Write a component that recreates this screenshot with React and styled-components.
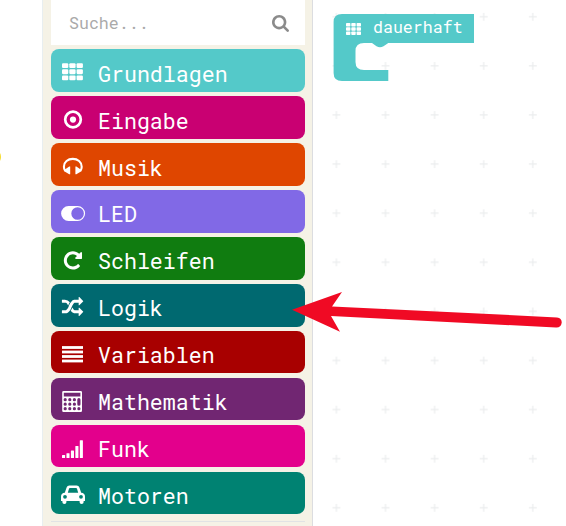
import React from "react";
import styled, { createGlobalStyle } from "styled-components";

const mono = `"Roboto Mono", "DejaVu Sans Mono", "Liberation Mono", monospace`;

const GlobalStyle = createGlobalStyle`
  *, *::before, *::after { box-sizing: border-box; }
  body { margin: 0; background: #fff; overflow: hidden; }
`;

const Editor = styled.main`
  position: relative;
  display: grid;
  grid-template-columns: 42px 271px 1fr;
  width: 566px;
  height: 526px;
  overflow: hidden;
  background: #fff;
  font-family: ${mono};
`;

const Simulator = styled.section`
  display: flex;
  align-items: center;
  overflow: hidden;
  padding-bottom: 213px;
`;

const SimulatorDot = styled.span`
  flex: none;
  width: 16px;
  height: 16px;
  margin-left: -15px;
  border-radius: 50%;
  background: #f5dc2e;
`;

const Toolbox = styled.aside`
  display: flex;
  flex-direction: column;
  padding: 0 7px 0 8px;
  border-left: 1px solid #e8eef0;
  border-right: 1px solid #dcdde0;
  background: #f5f2e6;
`;

const SearchBox = styled.label`
  flex: none;
  display: flex;
  align-items: center;
  justify-content: space-between;
  width: 254px;
  height: 45px;
  margin-bottom: 4px;
  padding: 1px 16px 0 18px;
  background: #fff;
`;

const SearchInput = styled.input`
  width: 150px;
  padding: 0 0 2px;
  border: 0;
  outline: 0;
  background: transparent;
  font: 16.6px ${mono};
  &::placeholder { color: #aaa; opacity: 1; }
`;

const CategoryList = styled.nav`
  display: flex;
  flex-direction: column;
  gap: 4.21px;
  width: 254px;
  padding-bottom: 6.6px;
  border-bottom: 1px solid #e1e3e4;
`;

const Category = styled.div`
  display: flex;
  align-items: flex-start;
  height: 42.75px;
  padding: 10px 0 0 9px;
  border-radius: 8px;
  background: ${(p) => p.$color};
  color: #fff;
`;

const CategoryIcon = styled.svg`
  flex: none;
  width: 26px;
  height: 24px;
  fill: currentColor;
`;

const CategoryName = styled.span`
  margin-left: 12px;
  padding-top: 1.61px;
  font-size: 21.6px;
  line-height: 26px;
  white-space: pre;
`;

const Workspace = styled.svg`
  width: 253px;
  height: 526px;
  font-family: ${mono};
`;

const Pointer = styled.svg`
  position: absolute;
  inset: 0;
  pointer-events: none;
`;

const RANDOM =
  "M666 481q-60 92-137 273-22-45-37-72.5t-40.5-63.5-51-56.5-63-35-81.5-14.5h-224q-14 0-23-9t-9-23v-192q0-14 9-23t23-9h224q250 0 410 225zm1126 799q0 14-9 23l-320 320q-9 9-23 9-13 0-22.5-9.5t-9.5-22.5v-192q-32 0-85 .5t-81 1-73-1-71-5-64-10.5-63-18.5-58-28.5-59-40-55-53.5-56-69.5q59-93 136-273 22 45 37 72.5t40.5 63.5 51 56.5 63 35 81.5 14.5h256v-192q0-14 9-23t23-9q12 0 24 10l319 319q9 9 9 23zm0-896q0 14-9 23l-320 320q-9 9-23 9-13 0-22.5-9.5t-9.5-22.5v-192h-256q-48 0-87 15t-69 45-51 61.5-45 77.5q-32 62-78 171-29 66-49.5 111t-54 105-64 100-74 83-90 68.5-106.5 42-128 16.5h-224q-14 0-23-9t-9-23v-192q0-14 9-23t23-9h224q48 0 87-15t69-45 51-61.5 45-77.5q32-62 78-171 29-66 49.5-111t54-105 64-100 74-83 90-68.5 106.5-42 128-16.5h256v-192q0-14 9-23t23-9q12 0 24 10l319 319q9 9 9 23z";
const REPEAT =
  "M1664 256v448q0 26-19 45t-45 19h-448q-42 0-59-40-17-39 14-69l138-138q-148-137-349-137-104 0-198.5 40.5t-163.5 109.5-109.5 163.5-40.5 198.5 40.5 198.5 109.5 163.5 163.5 109.5 198.5 40.5q119 0 225-52t179-147q7-10 23-12 15 0 25 9l137 138q9 8 9.5 20.5t-7.5 22.5q-109 132-264 204.5t-327 72.5q-156 0-298-61t-245-164-164-245-61-298 61-298 164-245 245-164 298-61q147 0 284.5 55.5t244.5 156.5l130-129q29-31 70-14 39 17 39 59z";
const SEARCH =
  "M1216 832q0-185-131.5-316.5t-316.5-131.5-316.5 131.5-131.5 316.5 131.5 316.5 316.5 131.5 316.5-131.5 131.5-316.5zm512 832q0 52-38 90t-90 38q-54 0-90-38l-343-342q-179 124-399 124-143 0-273.5-55.5t-225-150-150-225-55.5-273.5 55.5-273.5 150-225 225-150 273.5-55.5 273.5 55.5 225 150 150 225 55.5 273.5q0 220-124 399l343 343q37 37 37 90z";

const SearchIcon = styled.svg`
  width: 17px;
  height: 17px;
  fill: #8b8b8b;
`;

const cells = [0, 1, 2];

const icons = {
  grid: cells.flatMap((r) =>
    cells.map((c) => (
      <rect key={`${r}${c}`} x={2 + c * 7.3} y={4.2 + r * 6.1} width="6.3" height="4.9" rx="1.1" />
    ))
  ),
  target: (
    <>
      <circle cx="13" cy="13.5" r="7.8" fill="none" stroke="currentColor" strokeWidth="2.7" />
      <circle cx="13" cy="13.6" r="3.1" />
    </>
  ),
  headphones: (
    <>
      <path
        d="M5.2 18C4.3 16.6 3.9 15.2 3.9 13.7C3.9 9 7.9 5.9 12.8 5.9S21.7 9 21.7 13.7C21.7 15.2 21.3 16.6 20.4 18"
        fill="none"
        stroke="currentColor"
        strokeWidth="2.1"
      />
      <path d="M9.2 13.4H10.2V21.3H9.2L7.6 20.2L4.6 18.6Q3.9 17.6 4.9 16.6L7.8 14.6Z" />
      <path d="M16.4 13.4H15.4V21.3H16.4L18 20.2L21 18.6Q21.7 17.6 20.7 16.6L17.8 14.6Z" />
    </>
  ),
  toggle: (
    <path
      fillRule="evenodd"
      d="M8.6 6H17.6A7.5 7.5 0 0 1 17.6 21H8.6A7.5 7.5 0 0 1 8.6 6ZM17.6 7.2A6.3 6.3 0 1 0 17.6 19.8A6.3 6.3 0 0 0 17.6 7.2Z"
    />
  ),
  repeat: <path transform="translate(2.3 2.8) scale(.01185)" d={REPEAT} />,
  random: <path transform="translate(1.9 2.6) scale(.0119)" d={RANDOM} />,
  lines: [5.1, 9.6, 14.1, 18.6].map((y) => <rect key={y} x="2" y={y} width="21" height="2.8" />),
  calculator: (
    <path
      fillRule="evenodd"
      d={
        "M3.5 3H20.7Q22 3 22 4.3V22.8Q22 24 20.7 24H3.5Q2.2 24 2.2 22.8V4.3Q2.2 3 3.5 3ZM3.8 4.7V8.6H20.4V4.7Z" +
        [11.7, 16.2, 20.7]
          .flatMap((y) =>
            [5.2, 9.8, 14.4].map((x) => `M${x - 1.6} ${y}a1.6 1.6 0 1 0 3.2 0a1.6 1.6 0 1 0 -3.2 0Z`)
          )
          .join("") +
        "M17.3 11.7a1.6 1.6 0 0 1 3.2 0v4.5a1.6 1.6 0 0 1 -3.2 0ZM17.3 20.7a1.6 1.6 0 1 0 3.2 0a1.6 1.6 0 1 0 -3.2 0Z"
      }
    />
  ),
  signal: [3, 4.8, 7.5, 12, 17.8].map((h, i) => (
    <rect key={h} x={2 + i * 4.45} y={23 - h} width="3.1" height={h} rx=".5" />
  )),
  car: (
    <path
      fillRule="evenodd"
      d="M4.8 10.8L6.6 5.5Q7.3 3.6 9.4 3.6H16.6Q18.8 3.6 19.4 5.5L21.2 10.8Q25 11.1 25 14.8V18.9H23.6V20.2Q23.6 22 21.6 22T19.6 20.2V18.9H6.4V20.2Q6.4 22 4.4 22T2.4 20.2V18.9H1V14.8Q1 11.1 4.8 10.8ZM7.8 10.8H18.2L17 6.7Q16.8 6.1 16.1 6.1H9.9Q9.2 6.1 9 6.7ZM5 12.9A1.9 1.9 0 1 0 5 16.7A1.9 1.9 0 1 0 5 12.9ZM21 12.9A1.9 1.9 0 1 0 21 16.7A1.9 1.9 0 1 0 21 12.9Z"
    />
  ),
};

const categories = [
  ["Grundlagen", "#54c9c9", "grid"],
  ["Eingabe", "#c90072", "target"],
  ["Musik", "#df4600", "headphones"],
  ["LED", "#8169e6", "toggle"],
  ["Schleifen", "#107c10", "repeat"],
  ["Logik", "#006970", "random"],
  ["Variablen", "#a80000", "lines"],
  ["Mathematik", "#712672", "calculator"],
  ["Funk", "#e3008c", "signal"],
  ["Motoren", "#008272", "car"],
];

function BlockWorkspace() {
  return (
    <Workspace viewBox="313 0 253 526">
      <defs>
        <pattern id="grid" x="311.9" y="-7.7" width="49.1" height="49.1" patternUnits="userSpaceOnUse">
          <path d="M20.5 24.5H28.5M24.5 20.5V28.5" stroke="#ebedee" strokeWidth="1.2" />
        </pattern>
      </defs>
      <rect x="314" width="252" height="526" fill="url(#grid)" />
      <path
        d="M342 14H474V43H388.3L383.5 46.2Q380 48.3 376.5 46.2L372 43H364Q355.5 43 355.5 51V62Q355.5 70 364 70H388.3V81H342Q333.6 81 333.6 73V22Q333.6 14 342 14Z"
        fill="#54c9c9"
      />
      <g fill="#fff">
        {cells.flatMap((r) =>
          cells.map((c) => (
            <rect key={`${r}${c}`} x={346 + c * 5.3} y={23 + r * 4.3} width="4.4" height="3.4" rx=".7" />
          ))
        )}
      </g>
      <text x="373" y="33" fill="#fff" fontSize="16.6">dauerhaft</text>
    </Workspace>
  );
}

export default function App() {
  return (
    <>
      <GlobalStyle />
      <Editor>
        <Simulator>
          <SimulatorDot />
        </Simulator>
        <Toolbox>
          <SearchBox>
            <SearchInput placeholder="Suche..." />
            <SearchIcon viewBox="64 128 1664 1664">
              <path d={SEARCH} />
            </SearchIcon>
          </SearchBox>
          <CategoryList>
            {categories.map(([name, color, icon]) => (
              <Category key={name} $color={color}>
                <CategoryIcon viewBox="0 0 26 24">{icons[icon]}</CategoryIcon>
                <CategoryName>{name}</CategoryName>
              </Category>
            ))}
          </CategoryList>
        </Toolbox>
        <BlockWorkspace />
        <Pointer width="566" height="526" viewBox="0 0 566 526">
          <path
            d="M292 309.7L342 292L332 306.5L557 317.4Q562 318 561.7 322.8Q561 327.8 556 327.5L331 316L340 331.7Z"
            fill="#f00a24"
          />
        </Pointer>
      </Editor>
    </>
  );
}
